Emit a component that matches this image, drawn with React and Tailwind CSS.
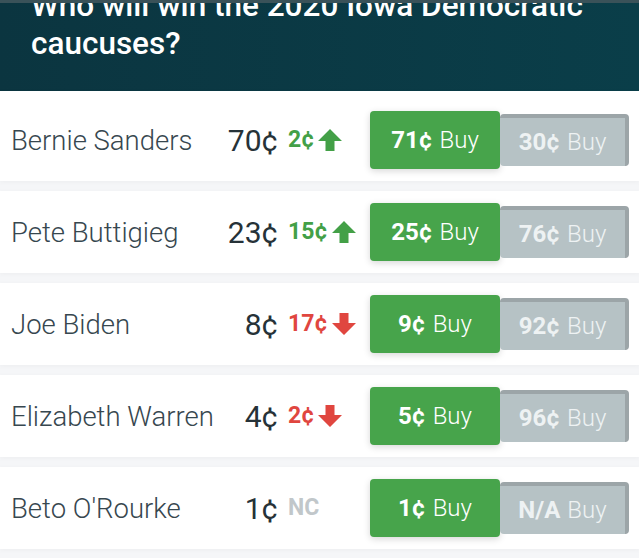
const candidates = [
  { name: "Bernie Sanders", price: "70¢", change: "2¢", dir: "up", yes: "71¢", no: "30¢" },
  { name: "Pete Buttigieg", price: "23¢", change: "15¢", dir: "up", yes: "25¢", no: "76¢" },
  { name: "Joe Biden", price: "8¢", change: "17¢", dir: "down", yes: "9¢", no: "92¢" },
  { name: "Elizabeth Warren", price: "4¢", change: "2¢", dir: "down", yes: "5¢", no: "96¢" },
  { name: "Beto O'Rourke", price: "1¢", change: "NC", dir: "none", yes: "1¢", no: "N/A" },
];

function Arrow({ dir }) {
  if (dir === "up") {
    return (
      <svg width="24" height="22" viewBox="0 0 24 22" className="ml-[4px] text-[#43a047]">
        <polygon points="12,0 24,12 16.5,12 16.5,22 7.5,22 7.5,12 0,12" fill="currentColor" />
      </svg>
    );
  }
  return (
    <svg width="24" height="22" viewBox="0 0 24 22" className="ml-[4px] text-[#e0463f]">
      <polygon points="12,22 24,10 16.5,10 16.5,0 7.5,0 7.5,10 0,10" fill="currentColor" />
    </svg>
  );
}

function Row({ c, first }) {
  const changeColor =
    c.dir === "up" ? "text-[#43a047]" : c.dir === "down" ? "text-[#e0463f]" : "text-[#c1c7ca] text-[21px]";
  return (
    <div
      className={`flex items-center bg-white pl-[11px] pr-[10px] shadow-[0_1px_5px_rgba(0,0,0,0.04)] ${
        first ? "h-[90px] pt-[8px]" : "h-[82px]"
      }`}
    >
      <div className="flex-1 min-w-0 whitespace-nowrap text-[27.5px] font-light text-[#37474f] pt-[2px]">{c.name}</div>
      <div className="w-[70px] text-right text-[30px] text-[#263238]">{c.price}</div>
      <div className={`w-[92px] pl-[10px] flex items-center font-bold text-[23px] ${changeColor}`}>
        <span>{c.change}</span>
        {c.dir !== "none" && <Arrow dir={c.dir} />}
      </div>
      <div className="flex items-center">
        <div className="w-[130px] h-[58px] rounded-[4px] bg-[#47a44b] text-white text-[24px] flex items-center justify-center gap-[7px] shadow-[0_2px_7px_rgba(0,0,0,0.16)]">
          <span className="font-bold">{c.yes}</span>
          <span className="font-light">Buy</span>
        </div>
        <div className="w-[129px] h-[52px] rounded-[4px] bg-[#b6c2c5] border-t-4 border-r-4 border-[#9ca5a8] text-[#eef2f3] text-[24px] flex items-center justify-center gap-[7px]">
          <span className="font-bold">{c.no}</span>
          <span className="font-light">Buy</span>
        </div>
      </div>
    </div>
  );
}

export default function App() {
  return (
    <div className="w-[639px] h-[558px] overflow-hidden bg-[#f5f6f8] font-['Roboto',sans-serif]">
      <div className="border-t-[3px] border-[#3a5259] bg-gradient-to-r from-[#0b3540] to-[#0a3e49]">
        <div className="h-[88px] overflow-hidden pl-[31px]">
          <h1 className="-mt-[16px] text-[31.5px] leading-[38px] font-medium text-white">
            Who will win the 2020 Iowa Democratic caucuses?
          </h1>
        </div>
      </div>
      <div className="flex flex-col gap-[10px]">
        {candidates.map((c, i) => (
          <Row key={c.name} c={c} first={i === 0} />
        ))}
      </div>
    </div>
  );
}
